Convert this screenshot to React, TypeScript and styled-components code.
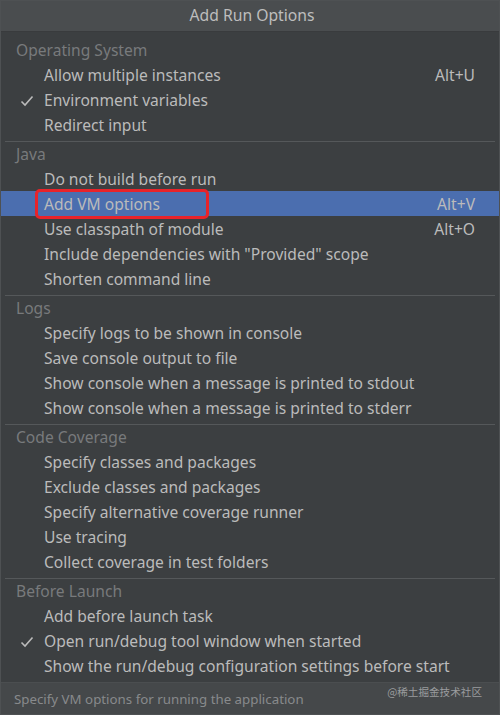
import styled, { createGlobalStyle } from 'styled-components'

const GlobalStyle = createGlobalStyle`
	html, body {
		margin: 0;
		padding: 0;
		background: #3c3f41;
	}
	* {
		box-sizing: border-box;
	}
`

type Item = { label: string; checked?: boolean; shortcut?: string; selected?: boolean }
type Group = { title: string; items: Item[] }

const GROUPS: Group[] = [
	{
		title: 'Operating System',
		items: [
			{ label: 'Allow multiple instances', shortcut: 'Alt+U' },
			{ label: 'Environment variables', checked: true },
			{ label: 'Redirect input' },
		],
	},
	{
		title: 'Java',
		items: [
			{ label: 'Do not build before run' },
			{ label: 'Add VM options', shortcut: 'Alt+V', selected: true },
			{ label: 'Use classpath of module', shortcut: 'Alt+O' },
			{ label: 'Include dependencies with "Provided" scope' },
			{ label: 'Shorten command line' },
		],
	},
	{
		title: 'Logs',
		items: [
			{ label: 'Specify logs to be shown in console' },
			{ label: 'Save console output to file' },
			{ label: 'Show console when a message is printed to stdout' },
			{ label: 'Show console when a message is printed to stderr' },
		],
	},
	{
		title: 'Code Coverage',
		items: [
			{ label: 'Specify classes and packages' },
			{ label: 'Exclude classes and packages' },
			{ label: 'Specify alternative coverage runner' },
			{ label: 'Use tracing' },
			{ label: 'Collect coverage in test folders' },
		],
	},
	{
		title: 'Before Launch',
		items: [
			{ label: 'Add before launch task' },
			{ label: 'Open run/debug tool window when started', checked: true },
			{ label: 'Show the run/debug configuration settings before start' },
		],
	},
]

function Check() {
	return (
		<svg width="14" height="12" viewBox="0 0 14 12">
			<path d="M1.5 6.5 L5 10 L12.5 1.5" fill="none" stroke="#bbbbbb" strokeWidth="1.6" />
		</svg>
	)
}

export default function App() {
	return (
		<Window>
			<GlobalStyle />
			<TitleBar>Add Run Options</TitleBar>
			<List>
				{GROUPS.map((group, gi) => (
					<Section key={group.title}>
						{gi > 0 && <Separator />}
						<Header>{group.title}</Header>
						{group.items.map((item) => (
							<Row key={item.label} $selected={item.selected}>
								<CheckCell>{item.checked && <Check />}</CheckCell>
								<Label>{item.label}</Label>
								{item.shortcut && <Shortcut>{item.shortcut}</Shortcut>}
								{item.selected && <Marker />}
							</Row>
						))}
					</Section>
				))}
			</List>
			<Footer>
				<Hint>Specify VM options for running the application</Hint>
				<Watermark>@稀土掘金技术社区</Watermark>
			</Footer>
		</Window>
	)
}

const Window = styled.div`
	width: 500px;
	height: 715px;
	display: flex;
	flex-direction: column;
	background: #3c3f41;
	border: 1px solid #4e5153;
	font-family: 'Noto Sans', 'Open Sans', sans-serif;
	color: #bbbbbb;
	overflow: hidden;
`

const TitleBar = styled.div`
	height: 31px;
	flex-shrink: 0;
	display: flex;
	align-items: center;
	justify-content: center;
	background: #4a4d4f;
	border-bottom: 1px solid #393b3d;
	font-size: 15.7px;
	color: #bdbdbd;
	padding-bottom: 2px;
	padding-left: 4px;
`

const List = styled.div`
	flex: 1;
	display: flex;
	flex-direction: column;
	padding-top: 6px;
`

const Section = styled.div`
	display: flex;
	flex-direction: column;
	padding-bottom: 4px;
`

const Separator = styled.div`
	height: 1px;
	margin: 0 4px 0 4px;
	background: #55585a;
`

const Header = styled.div`
	height: 24px;
	display: flex;
	align-items: center;
	padding-left: 15px;
	font-size: 15.6px;
	color: #787a7c;
`

const Row = styled.div<{ $selected?: boolean }>`
	position: relative;
	height: 25px;
	display: flex;
	align-items: center;
	padding-right: 24px;
	background: ${({ $selected }) => ($selected ? '#4b6eaf' : 'transparent')};
	font-size: 15.6px;
`

const CheckCell = styled.div`
	width: 43px;
	display: flex;
	justify-content: flex-start;
	padding-left: 19px;
	padding-top: 2px;
`

const Label = styled.div`
	flex: 1;
	white-space: nowrap;
	color: #bbbbbb;
`

const Marker = styled.div`
	position: absolute;
	left: 34px;
	top: -2px;
	width: 174px;
	height: 30px;
	border: 3px solid #e8232a;
	border-radius: 5px;
`

const Shortcut = styled.div`
	color: #bbbbbb;
`

const Footer = styled.div`
	height: 32px;
	flex-shrink: 0;
	display: flex;
	align-items: center;
	justify-content: space-between;
	padding: 0 17px 0 13px;
	background: #45484a;
	border-top: 1px solid #4b4e50;
`

const Hint = styled.div`
	font-size: 13.3px;
	color: #888a8c;
	white-space: nowrap;
`

const Watermark = styled.div`
	font-family: 'Noto Sans CJK SC', sans-serif;
	font-size: 10.6px;
	color: #9a9c9e;
	margin-top: -14px;
	white-space: nowrap;
`
